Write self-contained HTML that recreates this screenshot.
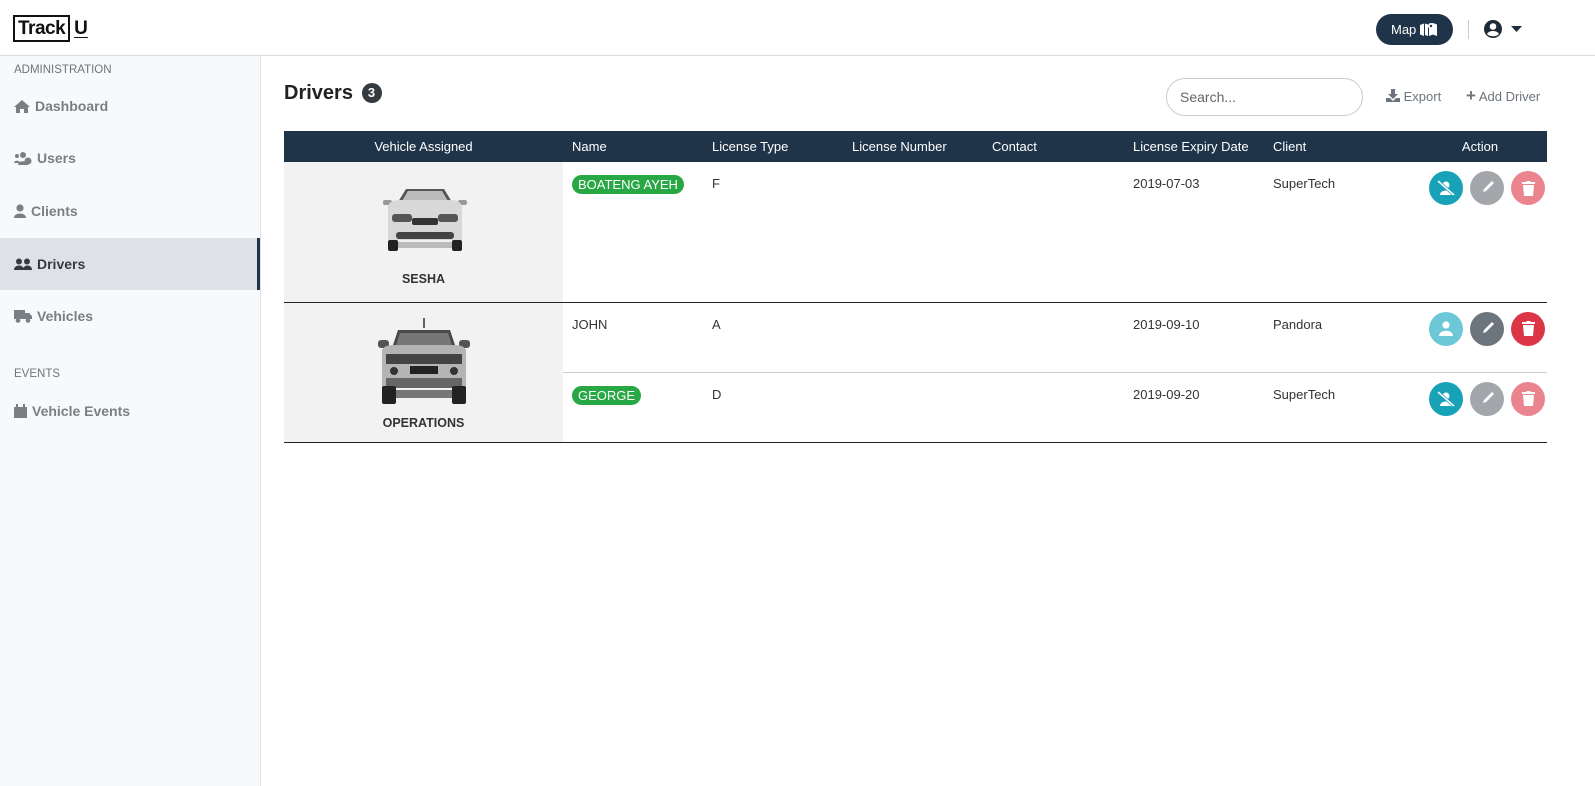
<!DOCTYPE html>
<html><head><meta charset="utf-8"><style>
*{box-sizing:border-box;margin:0;padding:0}
body{width:1595px;height:786px;overflow:hidden;background:#fff;font-family:"Liberation Sans",sans-serif;color:#212529;position:relative}
.hdr{position:absolute;left:0;top:0;width:1595px;height:56px;border-bottom:1px solid #dcdcdc;background:#fff}
.logo{position:absolute;left:13px;top:15px;font-size:19px;font-weight:bold;color:#111}
.logo .b{border:2px solid #111;padding:0 3px;display:inline-block;line-height:23px;letter-spacing:-0.5px}
.logo .u{text-decoration:underline;margin-left:4px;text-underline-offset:3px}
.map{position:absolute;left:1376px;top:14px;width:77px;height:31px;border-radius:16px;background:#1f3349;color:#fff;font-size:13px;line-height:31px;padding-left:15px}
.sep{position:absolute;left:1468px;top:20px;width:1px;height:19px;background:#ccc}
.side{position:absolute;left:0;top:56px;width:261px;height:730px;background:#f8f9fa;border-right:1px solid #e3e3e3}
.sec{position:absolute;left:14px;font-size:11.5px;color:#6c757d}
.it{position:absolute;left:0;width:260px;height:52px;font-size:14px;font-weight:bold;color:#7a7f84;padding-left:14px;display:flex;align-items:center;gap:5px}
.it.act{background:#dee2e6;color:#343a40;border-right:3px solid #1f3349}
.it svg{fill:currentColor}
h2{position:absolute;left:284px;top:82px;font-size:20px;font-weight:bold;color:#222}
.badge{display:inline-block;width:20px;height:20px;border-radius:50%;background:#343a40;color:#fff;font-size:13px;text-align:center;line-height:20px;vertical-align:2px;margin-left:3px}
.search{position:absolute;left:1166px;top:78px;width:197px;height:38px;border:1px solid #ccc;border-radius:19px;font-size:14px;color:#666;padding:10px 13px}
.lnk{position:absolute;top:89px;font-size:13px;color:#6c757d}
table{position:absolute;left:284px;top:131px;width:1263px;border-collapse:collapse;font-size:13px}
th{background:#1f3349;color:#fff;font-weight:normal;height:31px;text-align:left;padding-left:9px}
td{vertical-align:top;padding:14px 0 0 9px;color:#333}
td.v{background:#f2f2f2;text-align:center;vertical-align:top;padding:0;font-weight:bold;font-size:12.5px}
.pill{display:inline-block;background:#28a745;color:#fff;border-radius:10px;padding:2px 6px;margin-top:-1px}
.btns{display:flex;gap:7px;padding-left:16px;margin-top:-5px}
.c{width:34px;height:34px;border-radius:50%;display:flex;align-items:center;justify-content:center}
.c svg{fill:#fff}
</style></head><body>
<div class="hdr">
 <div class="logo"><span class="b">Track</span><span class="u">U</span></div>
 <div class="map">Map <svg width="17" height="14" viewBox="0 0 17 14" style="vertical-align:-2px"><path fill="#fff" d="M0 3l4-1.5V14L0 12.5zM5 1.5l3 1V14l-3-1zM9 2.5l4-1.5 4 1.5V14l-4-1.5-4 1.5z"/><circle cx="11" cy="4" r="3" fill="#fff"/><circle cx="11" cy="4" r="1.2" fill="#1f3349"/></svg></div>
 <div class="sep"></div>
 <svg style="position:absolute;left:1483px;top:19px" width="44" height="20" viewBox="0 0 44 20"><circle cx="10" cy="10" r="9" fill="#1f2a38"/><circle cx="10" cy="7.5" r="3.3" fill="#fff"/><path d="M4 15c2-4 10-4 12 0c-3 3-9 3-12 0z" fill="#fff"/><path d="M28 7h11l-5.5 6z" fill="#1f2a38"/></svg>
</div>
<div class="side">
 <div class="sec" style="top:8px">ADMINISTRATION</div>
 <div class="it" style="top:24px"><svg width="16" height="13" viewBox="0 0 16 13"><path d="M8 0L0 7h2v6h4V9h4v4h4V7h2z"/></svg>Dashboard</div>
 <div class="it" style="top:76px"><svg width="18" height="13" viewBox="0 0 18 13"><circle cx="3" cy="4" r="2"/><circle cx="9" cy="3" r="3"/><path d="M0 11c0-3 6-3 6 0zM4 13c0-5 10-5 10 0z"/><circle cx="14" cy="9" r="3.5"/></svg>Users</div>
 <div class="it" style="top:129px"><svg width="12" height="14" viewBox="0 0 12 14"><circle cx="6" cy="4" r="3.6"/><path d="M0 14c0-6 12-6 12 0z"/></svg>Clients</div>
 <div class="it act" style="top:182px"><svg width="18" height="13" viewBox="0 0 18 13"><circle cx="5" cy="3.5" r="3"/><circle cx="13" cy="3.5" r="3"/><path d="M0 12c0-6 10-6 10 0zM9 12c0-6 9-6 9 0z"/></svg>Drivers</div>
 <div class="it" style="top:234px"><svg width="18" height="14" viewBox="0 0 18 14"><path d="M0 1h11v9H0zM11 4h4l3 3v3h-7z"/><circle cx="4" cy="11.5" r="2.3"/><circle cx="14" cy="11.5" r="2.3"/></svg>Vehicles</div>
 <div class="sec" style="top:312px">EVENTS</div>
 <div class="it" style="top:329px"><svg width="13" height="14" viewBox="0 0 13 14"><path d="M0 3h13v11H0zM2 0h2v3H2zM9 0h2v3H9z"/></svg>Vehicle Events</div>
</div>
<h2>Drivers <span class="badge">3</span></h2>
<div class="search">Search...</div>
<div class="lnk" style="left:1386px"><svg width="14" height="13" viewBox="0 0 14 13" style="vertical-align:-1px"><path fill="#6c757d" d="M5 0h4v5h3L7 10 2 5h3zM0 9h4l3 3 3-3h4v4H0z"/></svg> Export</div>
<div class="lnk" style="left:1466px"><span style="font-size:17px;font-weight:bold;line-height:10px">+</span> Add Driver</div>
<table>
<tr><th style="width:279px;text-align:center;padding:0">Vehicle Assigned</th><th style="width:140px">Name</th><th style="width:140px">License Type</th><th style="width:140px">License Number</th><th style="width:141px">Contact</th><th style="width:140px">License Expiry Date</th><th style="width:140px">Client</th><th style="text-align:center">Action</th></tr>
<tr style="height:140px;border-bottom:1px solid #222">
<td class="v"><svg width="90" height="72" viewBox="0 0 90 72" style="margin-top:22px;display:block;margin-left:96px"><path d="M18 18l8-13h38l8 13z" fill="#555"/><path d="M22 17l6-10h34l6 10z" fill="#bbb"/><rect x="3" y="16" width="9" height="5" rx="2" fill="#999"/><rect x="78" y="16" width="9" height="5" rx="2" fill="#999"/><path d="M8 22q2-6 12-6h50q10 0 12 6v34H8z" fill="#d8d8d8"/><rect x="12" y="30" width="20" height="8" rx="3" fill="#555"/><rect x="58" y="30" width="20" height="8" rx="3" fill="#555"/><rect x="32" y="34" width="26" height="7" rx="2" fill="#333"/><rect x="16" y="48" width="58" height="7" rx="3" fill="#444"/><rect x="8" y="56" width="10" height="11" rx="2" fill="#222"/><rect x="72" y="56" width="10" height="11" rx="2" fill="#222"/><rect x="18" y="58" width="54" height="6" fill="#bbb"/></svg><div style="margin-top:16px">SESHA</div></td>
<td><span class="pill">BOATENG AYEH</span></td><td>F</td><td></td><td></td><td>2019-07-03</td><td>SuperTech</td>
<td><div class="btns"><div class="c" style="background:#17a2b8"><svg width="18" height="16" viewBox="0 0 18 16"><circle cx="9" cy="5" r="3.5"/><path d="M3 15c0-6 12-6 12 0z"/><path d="M1 1l16 14" stroke="#17a2b8" stroke-width="3"/><path d="M1 1l16 14" stroke="#fff" stroke-width="1.5"/></svg></div><div class="c" style="background:#a3a7ab"><svg width="14" height="14" viewBox="0 0 14 14"><path d="M12 0l2 2-8 8-3 1 1-3z M3 11l-3 3"/></svg></div><div class="c" style="background:#ea858f"><svg width="13" height="15" viewBox="0 0 13 15"><path d="M0 1h4l1-1h3l1 1h4v2H0zM1 4h11l-1 11H2z"/></svg></div></div></td>
</tr>
<tr style="height:70px;border-bottom:1px solid #ccc">
<td class="v" rowspan="2" style="border-bottom:1px solid #222"><svg width="96" height="88" viewBox="0 0 96 88" style="display:block;margin:15px 0 0 92px"><path d="M48 0v10" stroke="#333" stroke-width="1.5"/><path d="M16 30l6-18h52l6 18z" fill="#4a4a4a"/><path d="M20 28l4-13h48l4 13z" fill="#777"/><rect x="2" y="22" width="11" height="8" rx="3" fill="#555"/><rect x="83" y="22" width="11" height="8" rx="3" fill="#555"/><path d="M6 32q2-5 12-5h60q10 0 12 5v38H6z" fill="#b4b4b4"/><rect x="10" y="36" width="76" height="10" fill="#444"/><rect x="34" y="48" width="28" height="8" fill="#222"/><circle cx="18" cy="53" r="4" fill="#333"/><circle cx="78" cy="53" r="4" fill="#333"/><rect x="10" y="60" width="76" height="10" fill="#666"/><rect x="6" y="68" width="14" height="18" rx="2" fill="#222"/><rect x="76" y="68" width="14" height="18" rx="2" fill="#222"/><rect x="20" y="72" width="56" height="8" fill="#777"/></svg><div style="margin-top:10px">OPERATIONS</div></td>
<td>JOHN</td><td>A</td><td></td><td></td><td>2019-09-10</td><td>Pandora</td>
<td><div class="btns"><div class="c" style="background:#6cc8d6"><svg width="14" height="15" viewBox="0 0 14 15"><circle cx="7" cy="4" r="3.6"/><path d="M0 15c0-7 14-7 14 0z"/></svg></div><div class="c" style="background:#6c757d"><svg width="14" height="14" viewBox="0 0 14 14"><path d="M12 0l2 2-8 8-3 1 1-3z"/></svg></div><div class="c" style="background:#dc3545"><svg width="13" height="15" viewBox="0 0 13 15"><path d="M0 1h4l1-1h3l1 1h4v2H0zM1 4h11l-1 11H2z"/></svg></div></div></td>
</tr>
<tr style="height:70px;border-bottom:1px solid #222">
<td><span class="pill">GEORGE</span></td><td>D</td><td></td><td></td><td>2019-09-20</td><td>SuperTech</td>
<td><div class="btns"><div class="c" style="background:#17a2b8"><svg width="18" height="16" viewBox="0 0 18 16"><circle cx="9" cy="5" r="3.5"/><path d="M3 15c0-6 12-6 12 0z"/><path d="M1 1l16 14" stroke="#17a2b8" stroke-width="3"/><path d="M1 1l16 14" stroke="#fff" stroke-width="1.5"/></svg></div><div class="c" style="background:#a3a7ab"><svg width="14" height="14" viewBox="0 0 14 14"><path d="M12 0l2 2-8 8-3 1 1-3z"/></svg></div><div class="c" style="background:#ea858f"><svg width="13" height="15" viewBox="0 0 13 15"><path d="M0 1h4l1-1h3l1 1h4v2H0zM1 4h11l-1 11H2z"/></svg></div></div></td>
</tr>
</table>
</body></html>
